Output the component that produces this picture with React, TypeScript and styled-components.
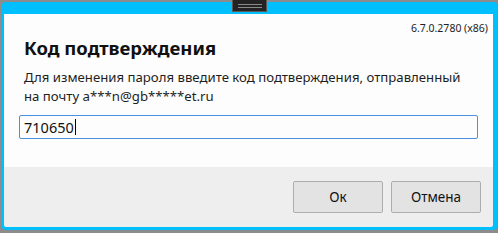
import React from "react";
import styled, { createGlobalStyle } from "styled-components";

const Global = createGlobalStyle`
  html, body { margin: 0; padding: 0; background: #8c8c8c; }
  body { font-family: "Noto Sans", "Segoe UI", sans-serif; width: 498px; height: 233px; overflow: hidden; }
`;

const Screen = styled.div`
  width: 498px;
  height: 233px;
  box-sizing: border-box;
  padding: 2px 0 3px 1px;
  position: relative;
`;

const Frame = styled.div`
  height: 100%;
  box-sizing: border-box;
  background: #00bfff;
  border-radius: 5px;
  padding: 12px 5px 3px 3px;
  display: flex;
`;

const Dialog = styled.div`
  flex: 1;
  display: flex;
  flex-direction: column;
  background: #fdfdfd;
  border-radius: 0 0 3px 3px;
  overflow: hidden;
`;

const Handle = styled.div`
  position: absolute;
  left: 232px;
  top: 0;
  width: 33px;
  height: 11px;
  background: #232323;
  border: 1px solid #5a5a5a;
  border-top: none;
  display: flex;
  flex-direction: column;
  align-items: center;
  justify-content: center;
  gap: 2px;
`;

const HandleLine = styled.div`
  width: 24px;
  height: 1px;
  background: #8a8a8a;
`;

const Body = styled.div`
  flex: 1;
  display: flex;
  flex-direction: column;
  padding: 8px 15px 0 15px;
`;

const Version = styled.div`
  align-self: flex-end;
  font-size: 10.5px;
  color: #222;
  margin-right: -10px;
  line-height: 13px;
`;

const Title = styled.h1`
  margin: 1px 0 0 5px;
  font-size: 18.5px;
  font-weight: 700;
  color: #111;
  line-height: 24px;
`;

const Text = styled.p`
  margin: 8px 0 0 5px;
  font-size: 13.2px;
  color: #1e1e1e;
  line-height: 19px;
`;

const Input = styled.div`
  margin-top: 9px;
  height: 24px;
  box-sizing: border-box;
  border: 1px solid #4a90e2;
  border-radius: 2px;
  padding: 0 0 0 4px;
  display: flex;
  align-items: center;
  font-size: 14.5px;
  color: #111;
`;

const Caret = styled.span`
  display: inline-block;
  width: 1px;
  height: 16px;
  background: #000;
  margin-left: 1px;
`;

const Footer = styled.div`
  height: 60px;
  background: #eeeeee;
  display: flex;
  justify-content: flex-end;
  align-items: flex-start;
  gap: 8px;
  padding: 14px 12px 0 0;
  box-sizing: border-box;
`;

const Button = styled.button`
  width: 90px;
  height: 32px;
  background: #e3e3e3;
  border: 1px solid #adadad;
  border-radius: 2px;
  font-family: "Noto Sans", "Segoe UI", sans-serif;
  font-size: 13.5px;
  color: #111;
  padding: 0;
`;

export default function App() {
  return (
    <>
      <Global />
      <Screen>
        <Handle>
          <HandleLine />
          <HandleLine />
        </Handle>
        <Frame>
          <Dialog>
            <Body>
              <Version>6.7.0.2780 (x86)</Version>
              <Title>Код подтверждения</Title>
              <Text>
                Для изменения пароля введите код подтверждения, отправленный
                <br />
                на почту a***n@gb*****et.ru
              </Text>
              <Input>
                710650
                <Caret />
              </Input>
            </Body>
            <Footer>
              <Button>Ок</Button>
              <Button>Отмена</Button>
            </Footer>
          </Dialog>
        </Frame>
      </Screen>
    </>
  );
}
